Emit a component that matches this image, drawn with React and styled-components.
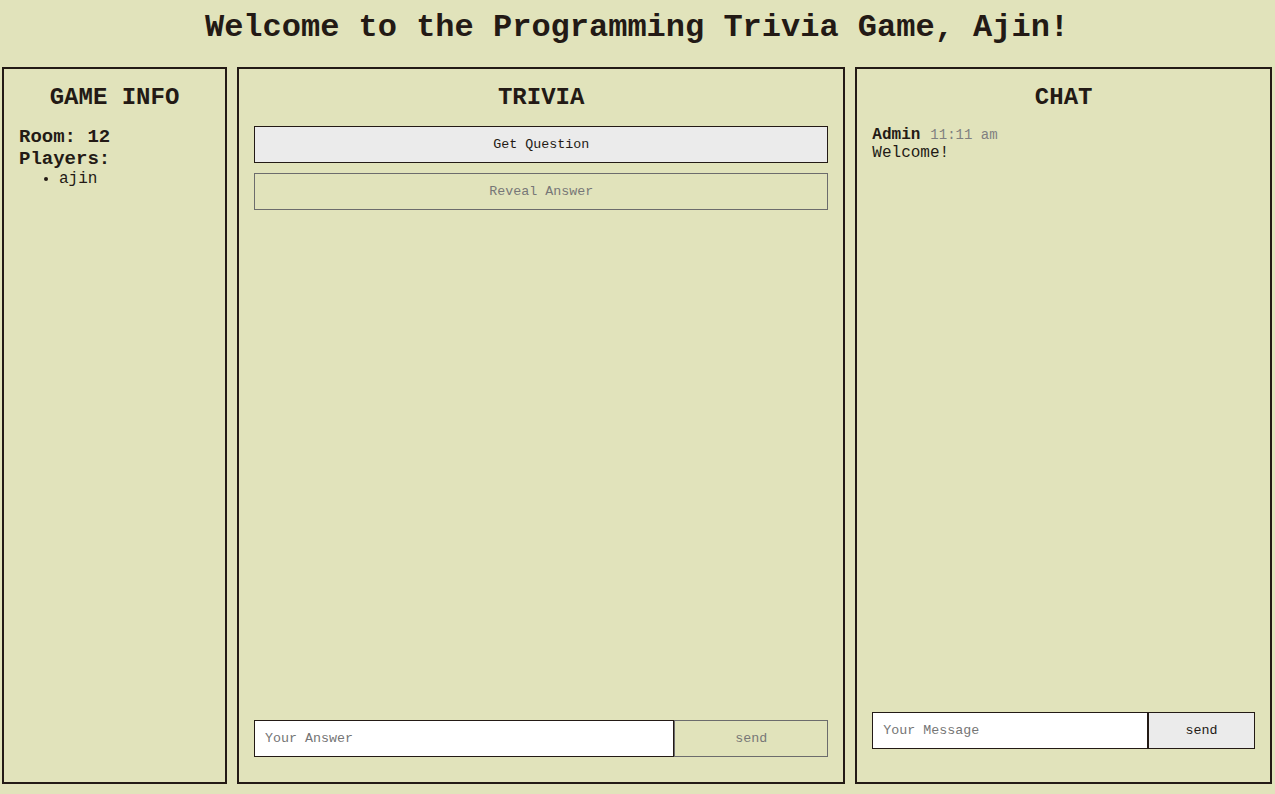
import React from "react";
import styled, { createGlobalStyle } from "styled-components";

const ink = "#231a15";
const paper = "#e1e3bb";
const muted = "#6c6c6c";

const GlobalStyle = createGlobalStyle`
  * { box-sizing: border-box; margin: 0; padding: 0; }
  body {
    background: ${paper};
    color: ${ink};
    font-family: "Liberation Mono", "Courier New", monospace;
    font-size: 16px;
    line-height: 18px;
  }
`;

const Page = styled.div`
  display: flex;
  flex-direction: column;
  min-height: 100vh;
  padding: 0 3px 10px 2px;
`;

const Title = styled.h1`
  padding: 10px 0 21px;
  font-size: 32px;
  line-height: 36px;
  text-align: center;
`;

const Board = styled.main`
  flex: 1;
  display: grid;
  grid-template-columns: 27fr 73fr 50fr;
  gap: 10px;
`;

const Panel = styled.section`
  display: flex;
  flex-direction: column;
  min-width: 0;
  padding: 15px;
  border: 2px solid ${ink};
`;

const PanelTitle = styled.h2`
  margin-bottom: 15px;
  font-size: 24px;
  line-height: 27px;
  text-align: center;
  text-transform: uppercase;
`;

const InfoLabel = styled.h3`
  font-size: 19px;
  line-height: 22px;
`;

const PlayerList = styled.ul`
  padding-left: 40px;
`;

const PanelBody = styled.div`
  flex: 1;
`;

const Actions = styled(PanelBody)`
  display: flex;
  flex-direction: column;
  gap: 10px;
`;

const Button = styled.button`
  height: 37px;
  min-width: 0;
  border: 1px solid ${ink};
  border-radius: 0;
  background: #ebebeb;
  color: ${ink};
  font-family: inherit;

  &:disabled {
    border-color: ${muted};
    background: transparent;
    color: #777;
  }
`;

const TextInput = styled.input`
  height: 37px;
  min-width: 0;
  padding: 0 10px;
  border: 1px solid ${ink};
  border-radius: 0;
  background: #fff;
  color: ${ink};
  font-family: inherit;

  &::placeholder { color: #757575; }
`;

const EntryForm = styled.form`
  display: grid;
  grid-template-columns: ${(p) => p.$columns};
  margin-bottom: ${(p) => p.$bottom};
`;

const MessageHead = styled.p`
  display: flex;
  align-items: baseline;
  gap: 10px;
`;

const Time = styled.time`
  color: gray;
  font-size: 14px;
`;

export default function App() {
  const stay = (event) => event.preventDefault();

  return (
    <>
      <GlobalStyle />
      <Page>
        <Title>Welcome to the Programming Trivia Game, Ajin!</Title>
        <Board>
          <Panel>
            <PanelTitle>Game Info</PanelTitle>
            <InfoLabel>Room: 12</InfoLabel>
            <InfoLabel>Players:</InfoLabel>
            <PlayerList>
              <li>ajin</li>
            </PlayerList>
          </Panel>
          <Panel>
            <PanelTitle>Trivia</PanelTitle>
            <Actions>
              <Button type="button">Get Question</Button>
              <Button type="button" disabled>Reveal Answer</Button>
            </Actions>
            <EntryForm $columns="30fr 11fr" $bottom="10px" onSubmit={stay}>
              <TextInput type="text" placeholder="Your Answer" aria-label="Your Answer" />
              <Button type="submit" disabled>send</Button>
            </EntryForm>
          </Panel>
          <Panel>
            <PanelTitle>Chat</PanelTitle>
            <PanelBody>
              <MessageHead>
                <strong>Admin</strong>
                <Time>11:11 am</Time>
              </MessageHead>
              <p>Welcome!</p>
            </PanelBody>
            <EntryForm $columns="18fr 7fr" $bottom="18px" onSubmit={stay}>
              <TextInput type="text" placeholder="Your Message" aria-label="Your Message" />
              <Button type="submit">send</Button>
            </EntryForm>
          </Panel>
        </Board>
      </Page>
    </>
  );
}
